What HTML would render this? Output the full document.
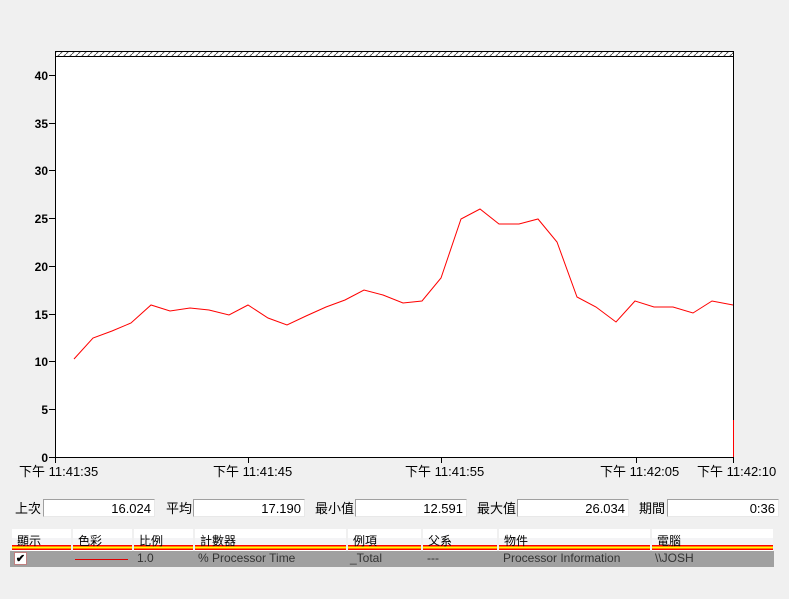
<!DOCTYPE html><html><head><meta charset="utf-8"><style>
body{margin:0;width:789px;height:599px;background:#f0f0f0;position:relative;overflow:hidden;font-family:"Liberation Sans","Noto Sans CJK TC",sans-serif;font-size:12px;color:#000}
.a{position:absolute}
.box{position:absolute;top:499px;height:18px;background:#fff;border:1px solid #a0a0a0;border-right-color:#e8e8e8;border-bottom-color:#e8e8e8;box-sizing:border-box;text-align:right;padding-right:3px;line-height:17px;font-size:13px}
.lbl{position:absolute;top:498px;font-size:13px}
.h{position:absolute;top:529px;height:22px;background:linear-gradient(#fff 0,#fff 9px,#f4f4f6 9px,#f4f4f6 16px,#f00 16px,#f00 17.5px,#ff0 17.5px,#ff0 19.5px,#f00 19.5px,#f00 21px,#fff 21px);font-size:12px;padding-left:5px;box-sizing:border-box;line-height:24px;border-right:2px solid #f0f0f0}
.c{position:absolute;top:551px;font-size:12px;line-height:15px;color:#333}
</style></head><body>
<svg class="a" style="left:0;top:0" width="789" height="480">
<defs><pattern id="p" width="6" height="6" patternUnits="userSpaceOnUse"><rect width="6" height="6" fill="#fff"/><path d="M0 6L6 0" stroke="#555" stroke-width="1"/></pattern></defs>
<rect x="55.5" y="51.5" width="678" height="5" fill="url(#p)" stroke="#000"/>
<rect x="55.5" y="56.5" width="678" height="401" fill="#fff" stroke="#000"/>
<line x1="733.5" y1="420" x2="733.5" y2="457" stroke="#f00"/>
<g stroke="#000">
<line x1="49" y1="75.5" x2="55" y2="75.5"/><line x1="49" y1="123.5" x2="55" y2="123.5"/><line x1="49" y1="170.5" x2="55" y2="170.5"/><line x1="49" y1="218.5" x2="55" y2="218.5"/><line x1="49" y1="266.5" x2="55" y2="266.5"/><line x1="49" y1="314.5" x2="55" y2="314.5"/><line x1="49" y1="361.5" x2="55" y2="361.5"/><line x1="49" y1="409.5" x2="55" y2="409.5"/><line x1="49" y1="457.5" x2="55" y2="457.5"/>
<line x1="248.5" y1="457" x2="248.5" y2="463"/><line x1="441.5" y1="457" x2="441.5" y2="463"/><line x1="636.5" y1="457" x2="636.5" y2="463"/><line x1="733.5" y1="457" x2="733.5" y2="463"/><line x1="55.5" y1="457" x2="55.5" y2="463"/>
</g>
<g font-size="12" font-weight="bold" text-anchor="end" font-family="Liberation Sans">
<text x="48" y="80">40</text><text x="48" y="128">35</text><text x="48" y="175">30</text><text x="48" y="223">25</text><text x="48" y="271">20</text><text x="48" y="319">15</text><text x="48" y="366">10</text><text x="48" y="414">5</text><text x="48" y="462">0</text>
</g>
<g font-size="13" font-family="Liberation Sans,Noto Sans CJK TC,sans-serif">
<text x="19" y="476">下午 11:41:35</text><text x="213" y="476">下午 11:41:45</text><text x="405" y="476">下午 11:41:55</text><text x="600" y="476">下午 11:42:05</text><text x="697" y="476">下午 11:42:10</text>
</g>
<polyline fill="none" stroke="#f00" stroke-width="1" points="74,359 93,338 112,331 131,323 151,305 170,311 190,308 209,310 229,315 248,305 268,318 287,325 306,316 326,307 345,300 364,290 383,295 403,303 422,301 441,278 461,219 480,209 499,224 519,224 538,219 557,242 577,297 596,307 616,322 635,301 654,307 673,307 693,313 712,301 733,305"/>
</svg>
<span class="lbl" style="left:15px">上次</span><div class="box" style="left:43px;width:112px">16.024</div>
<span class="lbl" style="left:166px">平均</span><div class="box" style="left:193px;width:112px">17.190</div>
<span class="lbl" style="left:315px">最小值</span><div class="box" style="left:355px;width:112px">12.591</div>
<span class="lbl" style="left:477px">最大值</span><div class="box" style="left:517px;width:112px">26.034</div>
<span class="lbl" style="left:639px">期間</span><div class="box" style="left:667px;width:112px">0:36</div>
<div class="h" style="left:12px;width:61px">顯示</div>
<div class="h" style="left:73px;width:61px">色彩</div>
<div class="h" style="left:134px;width:61px">比例</div>
<div class="h" style="left:195px;width:153px">計數器</div>
<div class="h" style="left:348px;width:75px">例項</div>
<div class="h" style="left:423px;width:76px">父系</div>
<div class="h" style="left:499px;width:153px">物件</div>
<div class="h" style="left:652px;width:123px">電腦</div>
<div class="a" style="left:10px;top:551px;width:764px;height:16px;background:#a0a0a0"></div>
<div class="a" style="left:14px;top:552px;width:13px;height:13px;background:#fff;border:1px solid #c08080;box-sizing:border-box;font-size:11px;line-height:12px;text-align:center;font-weight:bold">✔</div>
<div class="a" style="left:75px;top:559px;width:53px;height:1px;background:#e00000"></div>
<span class="c" style="left:137px">1.0</span>
<span class="c" style="left:198px">% Processor Time</span>
<span class="c" style="left:350px">_Total</span>
<span class="c" style="left:427px">---</span>
<span class="c" style="left:503px">Processor Information</span>
<span class="c" style="left:655px">\\JOSH</span>
</body></html>
